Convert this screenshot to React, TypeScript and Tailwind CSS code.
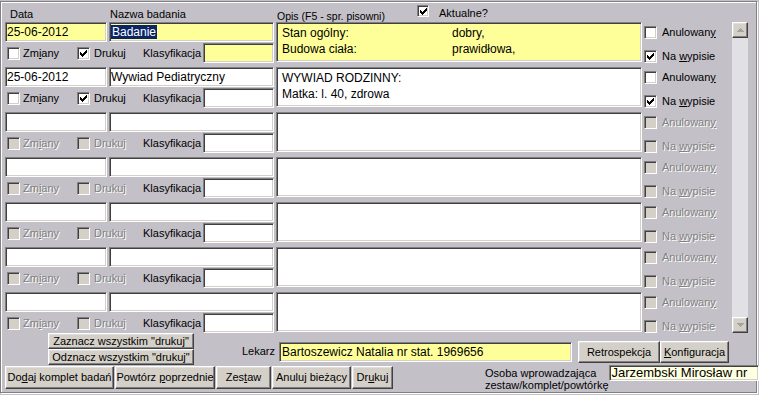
import React from "react";

const sunken =
  "border border-t-[#808080] border-l-[#808080] border-b-white border-r-white shadow-[inset_1px_1px_0_#404040,inset_-1px_-1px_0_#d4d0c8]";
const raised =
  "border border-t-white border-l-white border-b-[#404040] border-r-[#404040] shadow-[inset_-1px_-1px_0_#808080,inset_1px_1px_0_#dfdfdf] bg-[#d4d0c8]";
const dim = "text-[#808080] [text-shadow:1px_1px_0_#fff]";

type RowData = {
  date: string;
  name: string;
  opis: React.ReactNode;
  yellow?: boolean;
  selected?: boolean;
  enabled: boolean;
  drukuj?: boolean;
  wypis?: boolean;
};

function Box({ checked, disabled, small }: { checked?: boolean; disabled?: boolean; small?: boolean }) {
  return (
    <span
      className={`relative inline-block shrink-0 ${small ? "h-[12px] w-[12px]" : "h-[13px] w-[13px]"} ${sunken} ${
        disabled ? "bg-[#d4d0c8]" : "bg-white"
      }`}
    >
      {checked && (
        <svg className="absolute left-0 top-0" width="11" height="11" viewBox="0 0 11 11" shapeRendering="crispEdges">
          <g fill="#000">
            <rect x="8" y="2" width="1" height="1" />
            <rect x="7" y="3" width="2" height="1" />
            <rect x="2" y="4" width="1" height="1" />
            <rect x="6" y="4" width="3" height="1" />
            <rect x="2" y="5" width="2" height="1" />
            <rect x="5" y="5" width="3" height="1" />
            <rect x="2" y="6" width="5" height="1" />
            <rect x="3" y="7" width="3" height="1" />
            <rect x="4" y="8" width="1" height="1" />
          </g>
        </svg>
      )}
    </span>
  );
}

function Field({ className = "", yellow, children }: { className?: string; yellow?: boolean; children?: React.ReactNode }) {
  return (
    <div
      className={`shrink-0 overflow-hidden whitespace-nowrap text-[12px] leading-[16px] text-black ${sunken} ${
        yellow ? "bg-[#ffff99]" : "bg-white"
      } ${className}`}
    >
      {children}
    </div>
  );
}

function Btn({ className = "", children }: { className?: string; children: React.ReactNode }) {
  return (
    <div className={`flex shrink-0 items-center justify-center text-[11px] leading-[13px] text-black ${raised} ${className}`}>
      <span className="whitespace-nowrap">{children}</span>
    </div>
  );
}

function Row({ r }: { r: RowData }) {
  const off = !r.enabled;
  return (
    <div className="flex h-[41px]">
      <div className="w-[269px] shrink-0">
        <div className="flex h-[20px] gap-[2px]">
          <Field className="h-[20px] w-[102px] py-[1px] pl-[1px]" yellow={r.yellow}>
            {r.date}
          </Field>
          <Field className="h-[20px] w-[165px] py-[1px] pl-[1px]" yellow={r.yellow}>
            {r.selected ? <span className="bg-[#0a246a] px-[1px] text-white">{r.name}</span> : r.name}
          </Field>
        </div>
        <div className="mt-[1px] flex h-[20px] items-center text-[11px] leading-[13px]">
          <div className="flex w-[72px] items-center gap-[3px] pl-[2px]">
            <Box disabled={off} />
            <span className={off ? dim : "text-black"}>
              Zm<u>i</u>any
            </span>
          </div>
          <div className="flex w-[66px] items-center gap-[4px]">
            <Box disabled={off} checked={r.drukuj} />
            <span className={off ? dim : "text-black"}>Drukuj</span>
          </div>
          <span className="w-[60px] text-black">Klasyfikacja</span>
          <Field className="h-[20px] w-[71px]" yellow={r.yellow} />
        </div>
      </div>
      <Field className="ml-[2px] h-[40px] w-[366px] whitespace-normal pl-[5px] pt-[2px] leading-[15px]" yellow={r.yellow}>
        {r.opis}
      </Field>
      <div className="ml-[2px] flex flex-col gap-[11px] pt-[4px] text-[11px] leading-[13px]">
        <div className="flex items-center gap-[5px]">
          <Box disabled={off} />
          <span className={off ? dim : "text-black"}>
            Anulowan<u>y</u>
          </span>
        </div>
        <div className="flex items-center gap-[5px]">
          <Box disabled={off} checked={r.wypis} />
          <span className={off ? dim : "text-black"}>
            Na <u>w</u>ypisie
          </span>
        </div>
      </div>
    </div>
  );
}

function Arrow({ down }: { down?: boolean }) {
  return (
    <div className={`flex h-[16px] w-[16px] items-center justify-center ${raised}`}>
      <svg width="7" height="5" viewBox="0 0 7 5" shapeRendering="crispEdges">
        <path d={down ? "M0 0h7L3.5 4z" : "M3.5 0L7 4H0z"} fill="#a3a3a3" />
      </svg>
    </div>
  );
}

const rows: RowData[] = [
  {
    date: "25-06-2012",
    name: "Badanie",
    yellow: true,
    selected: true,
    enabled: true,
    drukuj: true,
    wypis: true,
    opis: (
      <div className="grid grid-cols-[170px_1fr]">
        <span>Stan ogólny:</span>
        <span>dobry,</span>
        <span>Budowa ciała:</span>
        <span>prawidłowa,</span>
      </div>
    ),
  },
  {
    date: "25-06-2012",
    name: "Wywiad Pediatryczny",
    enabled: true,
    drukuj: true,
    wypis: true,
    opis: (
      <div>
        <div>WYWIAD RODZINNY:</div>
        <div>Matka: l. 40, zdrowa</div>
      </div>
    ),
  },
  ...Array.from({ length: 5 }, () => ({ date: "", name: "", opis: null, enabled: false })),
];

export default function App() {
  return (
    <div className="h-[395px] w-[759px] overflow-hidden bg-[#c3c1c7] font-['Liberation_Sans',Arial,sans-serif] text-black">
      <div className="mt-[1px] h-[392px] w-[757px] border border-[#808080] shadow-[inset_1px_1px_0_#fff,1px_1px_0_#fff]">
        <div className="flex h-[20px] items-start pl-[9px] text-[11px] leading-[13px]">
          <span className="mt-[6px] w-[100px]">Data</span>
          <span className="mt-[6px] w-[167px]">Nazwa badania</span>
          <span className="mt-[8px] w-[140px] text-[10.5px]">Opis (F5 - spr. pisowni)</span>
          <span className="mt-[3px]">
            <Box checked small />
          </span>
          <span className="ml-[10px] mt-[5px]">Aktualne?</span>
        </div>

        <div className="flex pl-[4px]">
          <div className="flex w-[727px] flex-col gap-[4px]">
            {rows.map((r, i) => (
              <Row key={i} r={r} />
            ))}
          </div>
          <div className="flex h-[311px] w-[16px] flex-col bg-[#e1e0e4]">
            <Arrow />
            <div className="flex-1" />
            <Arrow down />
          </div>
        </div>

        <div className="flex h-[32px] items-start">
          <div className="ml-[47px] flex w-[146px] flex-col">
            <Btn className="h-[16px]">Zaznacz wszystkim "drukuj"</Btn>
            <Btn className="h-[16px]">Odznacz wszystkim "drukuj"</Btn>
          </div>
          <span className="mt-[12px] w-[85px] pr-[4px] text-right text-[11px] leading-[13px]">Lekarz</span>
          <Field className="mt-[9px] h-[20px] w-[293px] py-[1px] pl-[2px]" yellow>
            Bartoszewicz Natalia nr stat. 1969656
          </Field>
          <Btn className="ml-[6px] mt-[8px] h-[22px] w-[82px]">Retrospekcja</Btn>
          <Btn className="mt-[8px] h-[22px] w-[69px]">
            <u>K</u>onfiguracja
          </Btn>
        </div>

        <div className="mt-[1px] flex items-start pl-[4px]">
          <Btn className="h-[23px] w-[109px]">
            Do<u>d</u>aj komplet badań
          </Btn>
          <Btn className="ml-[1px] h-[23px] w-[100px]">
            Powtórz <u>p</u>oprzednie
          </Btn>
          <Btn className="ml-[1px] h-[23px] w-[55px]">
            Zes<u>t</u>aw
          </Btn>
          <Btn className="ml-[1px] h-[23px] w-[79px]">Anuluj bieżący</Btn>
          <Btn className="ml-[1px] h-[23px] w-[41px]">
            Dr<u>u</u>kuj
          </Btn>
          <div className="ml-[92px] mt-[1px] w-[126px] text-[11px] leading-[12px]">
            <div>Osoba wprowadzająca</div>
            <div>zestaw/komplet/powtórkę</div>
          </div>
          <div
            className={`-mt-[1px] h-[16px] w-[150px] shrink-0 overflow-hidden whitespace-nowrap bg-[#ffffe1] pl-[2px] text-[13px] leading-[14px] ${sunken}`}
          >
            Jarzembski Mirosław nr
          </div>
        </div>
      </div>
    </div>
  );
}
